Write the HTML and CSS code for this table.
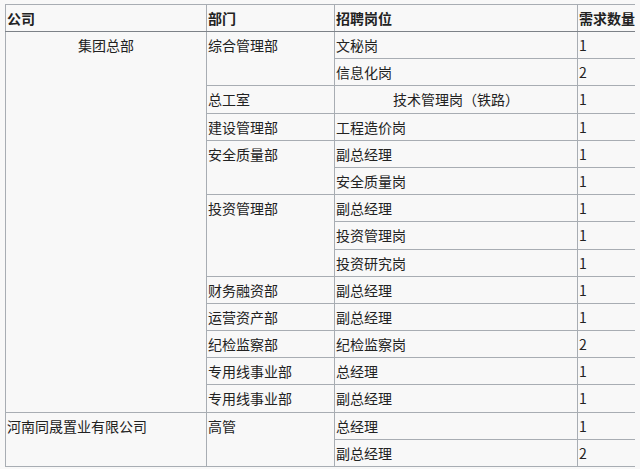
FILE: index.html
```html
<!DOCTYPE html>
<html lang="zh-CN">
<head>
<meta charset="utf-8">
<title>招聘岗位</title>
<link rel="stylesheet" href="styles.css">
</head>
<body>
<table class="jobs">
  <colgroup>
    <col class="c-company">
    <col class="c-dept">
    <col class="c-post">
    <col class="c-num">
  </colgroup>
  <thead>
    <tr class="head">
      <th>公司</th>
      <th>部门</th>
      <th>招聘岗位</th>
      <th>需求数量</th>
    </tr>
  </thead>
  <tbody>
    <tr class="g">
      <td rowspan="14" class="center">集团总部</td>
      <td rowspan="2">综合管理部</td>
      <td>文秘岗</td>
      <td>1</td>
    </tr>
    <tr>
      <td>信息化岗</td>
      <td>2</td>
    </tr>
    <tr class="g">
      <td>总工室</td>
      <td class="center">技术管理岗（铁路）</td>
      <td>1</td>
    </tr>
    <tr class="g">
      <td>建设管理部</td>
      <td>工程造价岗</td>
      <td>1</td>
    </tr>
    <tr class="g">
      <td rowspan="2">安全质量部</td>
      <td>副总经理</td>
      <td>1</td>
    </tr>
    <tr>
      <td>安全质量岗</td>
      <td>1</td>
    </tr>
    <tr class="g">
      <td rowspan="3">投资管理部</td>
      <td>副总经理</td>
      <td>1</td>
    </tr>
    <tr>
      <td>投资管理岗</td>
      <td>1</td>
    </tr>
    <tr>
      <td>投资研究岗</td>
      <td>1</td>
    </tr>
    <tr class="g">
      <td>财务融资部</td>
      <td>副总经理</td>
      <td>1</td>
    </tr>
    <tr class="g">
      <td>运营资产部</td>
      <td>副总经理</td>
      <td>1</td>
    </tr>
    <tr class="g">
      <td>纪检监察部</td>
      <td>纪检监察岗</td>
      <td>2</td>
    </tr>
    <tr class="g">
      <td>专用线事业部</td>
      <td>总经理</td>
      <td>1</td>
    </tr>
    <tr>
      <td>专用线事业部</td>
      <td>副总经理</td>
      <td>1</td>
    </tr>
    <tr class="g">
      <td rowspan="2">河南同晟置业有限公司</td>
      <td rowspan="2">高管</td>
      <td>总经理</td>
      <td>1</td>
    </tr>
    <tr>
      <td>副总经理</td>
      <td>2</td>
    </tr>
  </tbody>
</table>
</body>
</html>
```

FILE: styles.css
```css
html, body {
  background: #f8f8f8;
}
body {
  margin: 4px 5px;
  font-family: "Noto Sans CJK SC", "Noto Sans", sans-serif;
  font-size: 14px;
  color: #222;
}
.jobs {
  border-collapse: collapse;
  table-layout: fixed;
  width: 631px;
  background: #f8f8f8;
  border: 1px solid #8e9399;
}
.c-company { width: 201px; }
.c-dept { width: 128px; }
.c-post { width: 243px; }
.c-num { width: 59px; }

.jobs th,
.jobs td {
  border: 1px solid #a8adb3;
  padding: 3px 1px 0 1px;
  line-height: 20px;
  height: 23px;
  box-sizing: border-box;
  text-align: left;
  vertical-align: top;
  white-space: nowrap;
  overflow: hidden;
}
.jobs th {
  font-weight: bold;
  padding-top: 3px;
  border-bottom: 1px solid #7d8288;
}
.head { height: 27px; }
.jobs tbody tr { height: 27.2px; }
.jobs tr.g td { border-top-color: #868b91; }
.jobs td:nth-last-child(1) { border-left-color: #7f8489; }
.jobs th:nth-child(4) { border-left-color: #7f8489; }
.jobs .center { text-align: center; }
```
